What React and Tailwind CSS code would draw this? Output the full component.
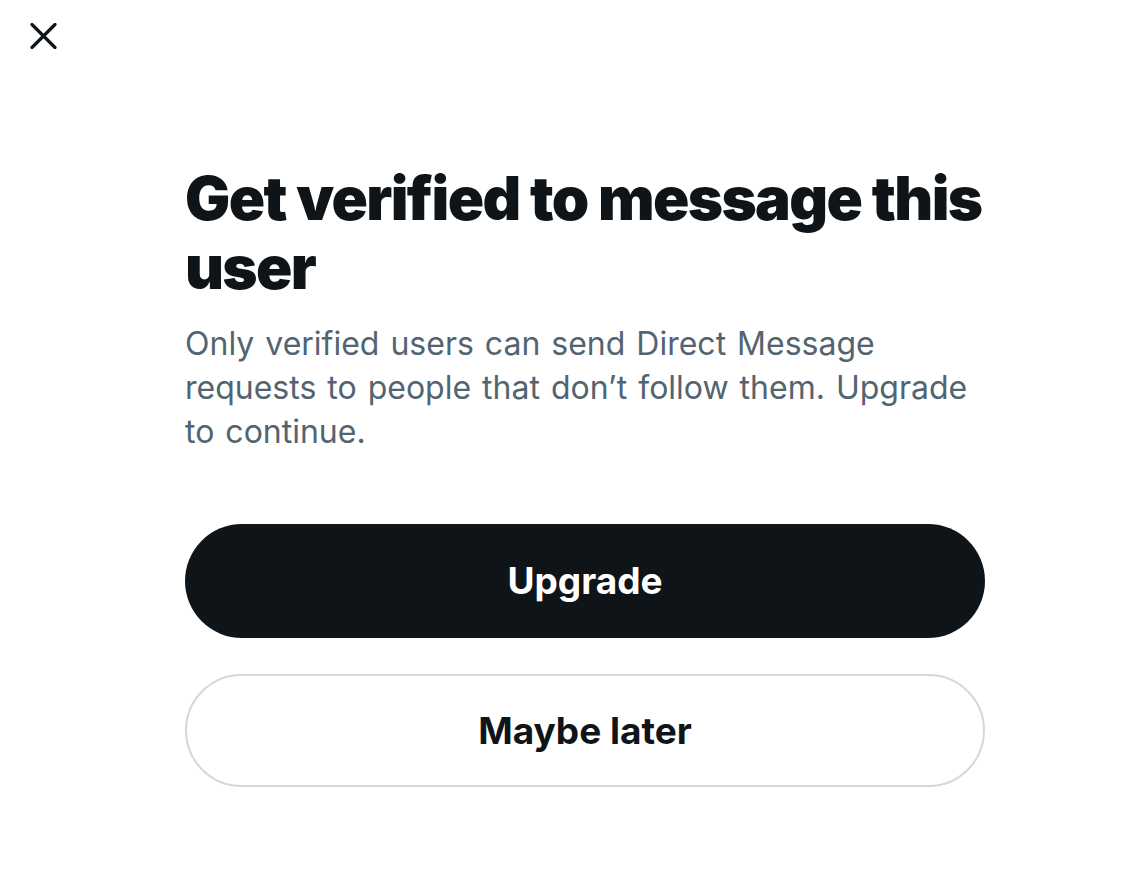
export default function App() {
  return (
    <div className="min-h-[890px] w-full bg-white" style={{ fontFamily: "Inter, 'Noto Sans', sans-serif" }}>
      <header className="pl-[30px] pt-[23px]">
        <button className="block h-[26px] w-[27px]" aria-label="Close">
          <svg width="27" height="26" viewBox="0 0 27 26" fill="none">
            <path d="M2 1.5 L25 24.5 M25 1.5 L2 24.5" stroke="#0f1419" strokeWidth="3.2" strokeLinecap="round" />
          </svg>
        </button>
      </header>
      <main className="mt-[115px] pl-[185px]">
        <div className="w-[800px] flex flex-col">
          <h1 className="text-[60px] leading-[69px] font-black text-[#0f1419] tracking-[-1.6px]">
            Get verified to message this user
          </h1>
          <p className="mt-[20px] text-[32px] leading-[44px] text-[#536471] [word-spacing:2px]">
            Only verified users can send Direct Message requests to people that don’t follow them. Upgrade to continue.
          </p>
          <button className="mt-[70px] h-[114px] w-full rounded-full bg-[#0f1419] text-white text-[37px] font-bold">
            Upgrade
          </button>
          <button className="mt-[36px] h-[113px] w-full rounded-full border-2 border-[#cfd9de] bg-white text-[#0f1419] text-[37px] font-bold">
            Maybe later
          </button>
        </div>
      </main>
    </div>
  );
}
